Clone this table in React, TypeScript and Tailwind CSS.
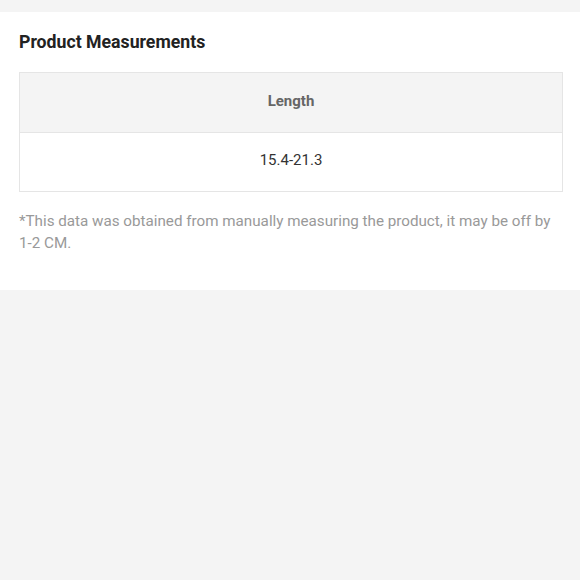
export default function App() {
  return (
    <div
      className="min-h-[580px] bg-[#f4f4f4] pt-[12px]"
      style={{ fontFamily: "Roboto, 'Liberation Sans', sans-serif" }}
    >
      <div className="bg-white pt-[18px] pb-[36px] pl-[19px] pr-[17px]">
        <h2 className="text-[17.7px] leading-[24px] font-bold text-[#222]">Product Measurements</h2>
        <table className="mt-[18px] w-full border-collapse border border-[#e5e5e5] text-center">
          <thead>
            <tr className="bg-[#f4f4f4]">
              <th className="h-[60px] pb-[2px] border-b border-[#e5e5e5] text-[15px] font-bold text-[#666]">Length</th>
            </tr>
          </thead>
          <tbody>
            <tr>
              <td className="h-[59px] pb-[4px] text-[15px] text-[#333]">15.4-21.3</td>
            </tr>
          </tbody>
        </table>
        <p className="mt-[18px] text-[15.2px] leading-[22px] text-[#999]">
          *This data was obtained from manually measuring the product, it may be off by{" "}
          <span className="whitespace-nowrap">1-2 CM.</span>
        </p>
      </div>
    </div>
  );
}
